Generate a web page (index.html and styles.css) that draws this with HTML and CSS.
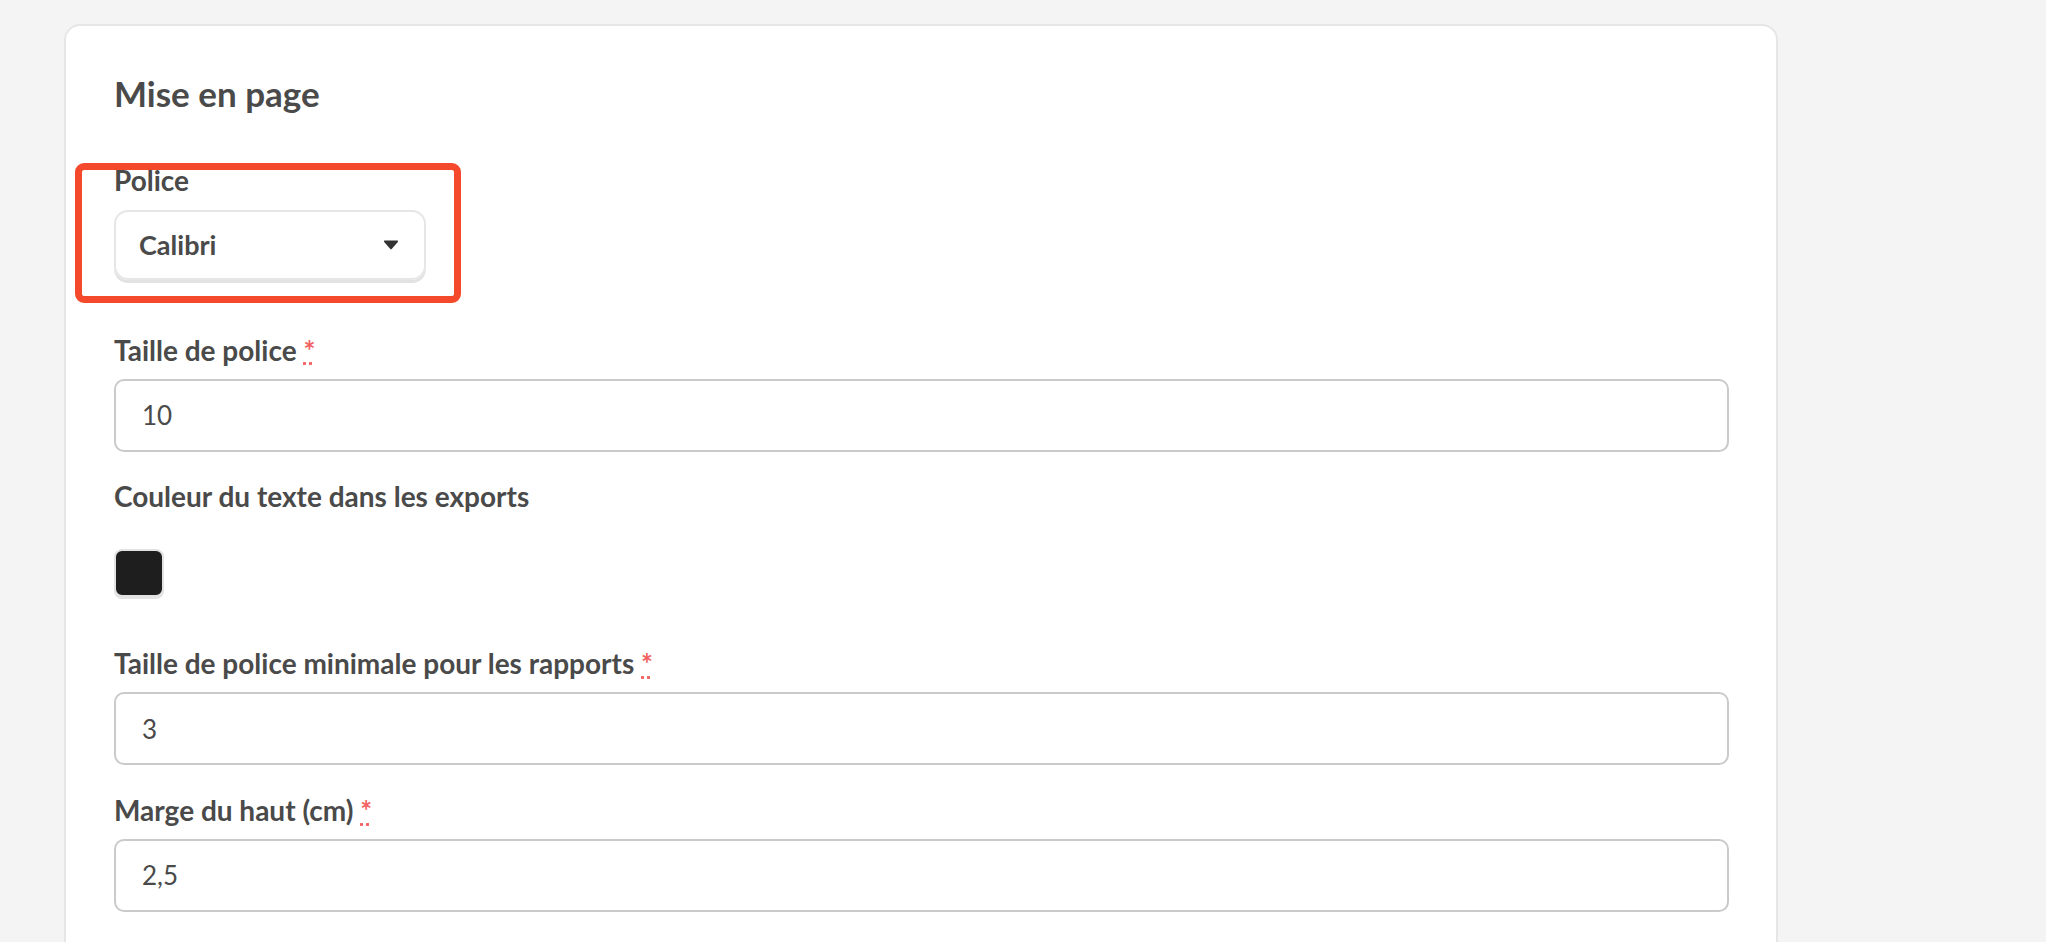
FILE: index.html
```html
<!DOCTYPE html>
<html lang="fr">
<head>
    <meta charset="UTF-8">
    <meta name="viewport" content="width=device-width, initial-scale=1.0">
    <title>Mise en page</title>
    <link rel="stylesheet" href="styles.css">
</head>
<body>
    <div class="page">
        <section class="card">
            <h2 class="card-title">Mise en page</h2>

            <div class="field field-select">
                <label class="field-label">Police</label>
                <div class="select">
                    <span>Calibri</span>
                    <svg class="caret" width="16" height="10" viewBox="0 0 16 10">
                        <path d="M1.2 2 Q0.2 0.6 1.8 0.6 H14.2 Q15.8 0.6 14.8 2 L8.9 8.8 Q8 9.8 7.1 8.8 Z" fill="#333"/>
                    </svg>
                </div>
                <span class="highlight"></span>
            </div>

            <div class="field">
                <label class="field-label" for="font-size">Taille de police <abbr class="required" title="obligatoire">*</abbr></label>
                <input class="text-input" type="text" id="font-size" value="10">
            </div>

            <div class="field field-color">
                <label class="field-label">Couleur du texte dans les exports</label>
                <div class="swatch"></div>
            </div>

            <div class="field">
                <label class="field-label" for="min-size">Taille de police minimale pour les rapports <abbr class="required" title="obligatoire">*</abbr></label>
                <input class="text-input" type="text" id="min-size" value="3">
            </div>

            <div class="field">
                <label class="field-label" for="margin-top">Marge du haut (cm) <abbr class="required" title="obligatoire">*</abbr></label>
                <input class="text-input" type="text" id="margin-top" value="2,5">
            </div>
        </section>
    </div>
</body>
</html>
```

FILE: styles.css
```css
/* Page */
html, body {
    height: 100%;
    overflow: hidden;
}

body {
    margin: 0;
    background-color: #f4f4f4;
    font-family: Lato, "Noto Sans", sans-serif;
    color: #4a4a4a;
}

.page {
    padding: 24px 0 0 64px;
}

/* Card */
.card {
    width: 1714px;
    min-height: 1000px;
    box-sizing: border-box;
    background: #fff;
    border: 2px solid #e6e6e6;
    border-radius: 16px;
    padding: 46px 47px 60px 48px;
}

.card-title {
    margin: 0 0 50px;
    font-size: 35px;
    font-weight: 700;
    line-height: 1.2;
}

/* Fields */
.field {
    margin-bottom: 28.5px;
}

.field-label {
    display: block;
    font-size: 28px;
    font-weight: 700;
    line-height: 1.2;
    margin-bottom: 11.5px;
}

.required {
    color: #f26262;
    text-decoration: underline dotted;
    text-decoration-color: #f26262;
    cursor: help;
}

.text-input {
    display: block;
    width: 100%;
    height: 73px;
    box-sizing: border-box;
    border: 2px solid #cacaca;
    border-radius: 10px;
    padding: 0 26px;
    font-family: Lato, "Noto Sans", sans-serif;
    font-size: 26px;
    color: #4a4a4a;
    background: #fff;
    outline: none;
}

/* Select */
.field-select {
    position: relative;
    width: 312px;
    margin-bottom: 54px;
}

.field-select .field-label {
    margin-bottom: 12px;
}

.select {
    height: 70px;
    box-sizing: border-box;
    border: 2px solid #e6e6e6;
    border-radius: 14px;
    box-shadow: 0 3px 0 #e2e2e2;
    padding: 0 25px 0 23px;
    display: flex;
    align-items: center;
    justify-content: space-between;
    font-size: 27px;
    font-weight: 700;
    cursor: pointer;
}

.caret {
    display: block;
}

/* annotation frame drawn over the select */
.highlight {
    position: absolute;
    top: -1px;
    left: -39px;
    right: -35px;
    bottom: -23px;
    border: 7px solid #f4492a;
    border-radius: 9px;
    pointer-events: none;
}

/* Colour picker */
.field-color {
    margin-bottom: 50.5px;
}

.field-color .field-label {
    margin-bottom: 35px;
}

.swatch {
    width: 50px;
    height: 48px;
    box-sizing: border-box;
    background: #1e1e1e;
    border: 2px solid #e2e2e2;
    border-radius: 8px;
    box-shadow: 0 2px 0 #e4e4e4;
}
```
